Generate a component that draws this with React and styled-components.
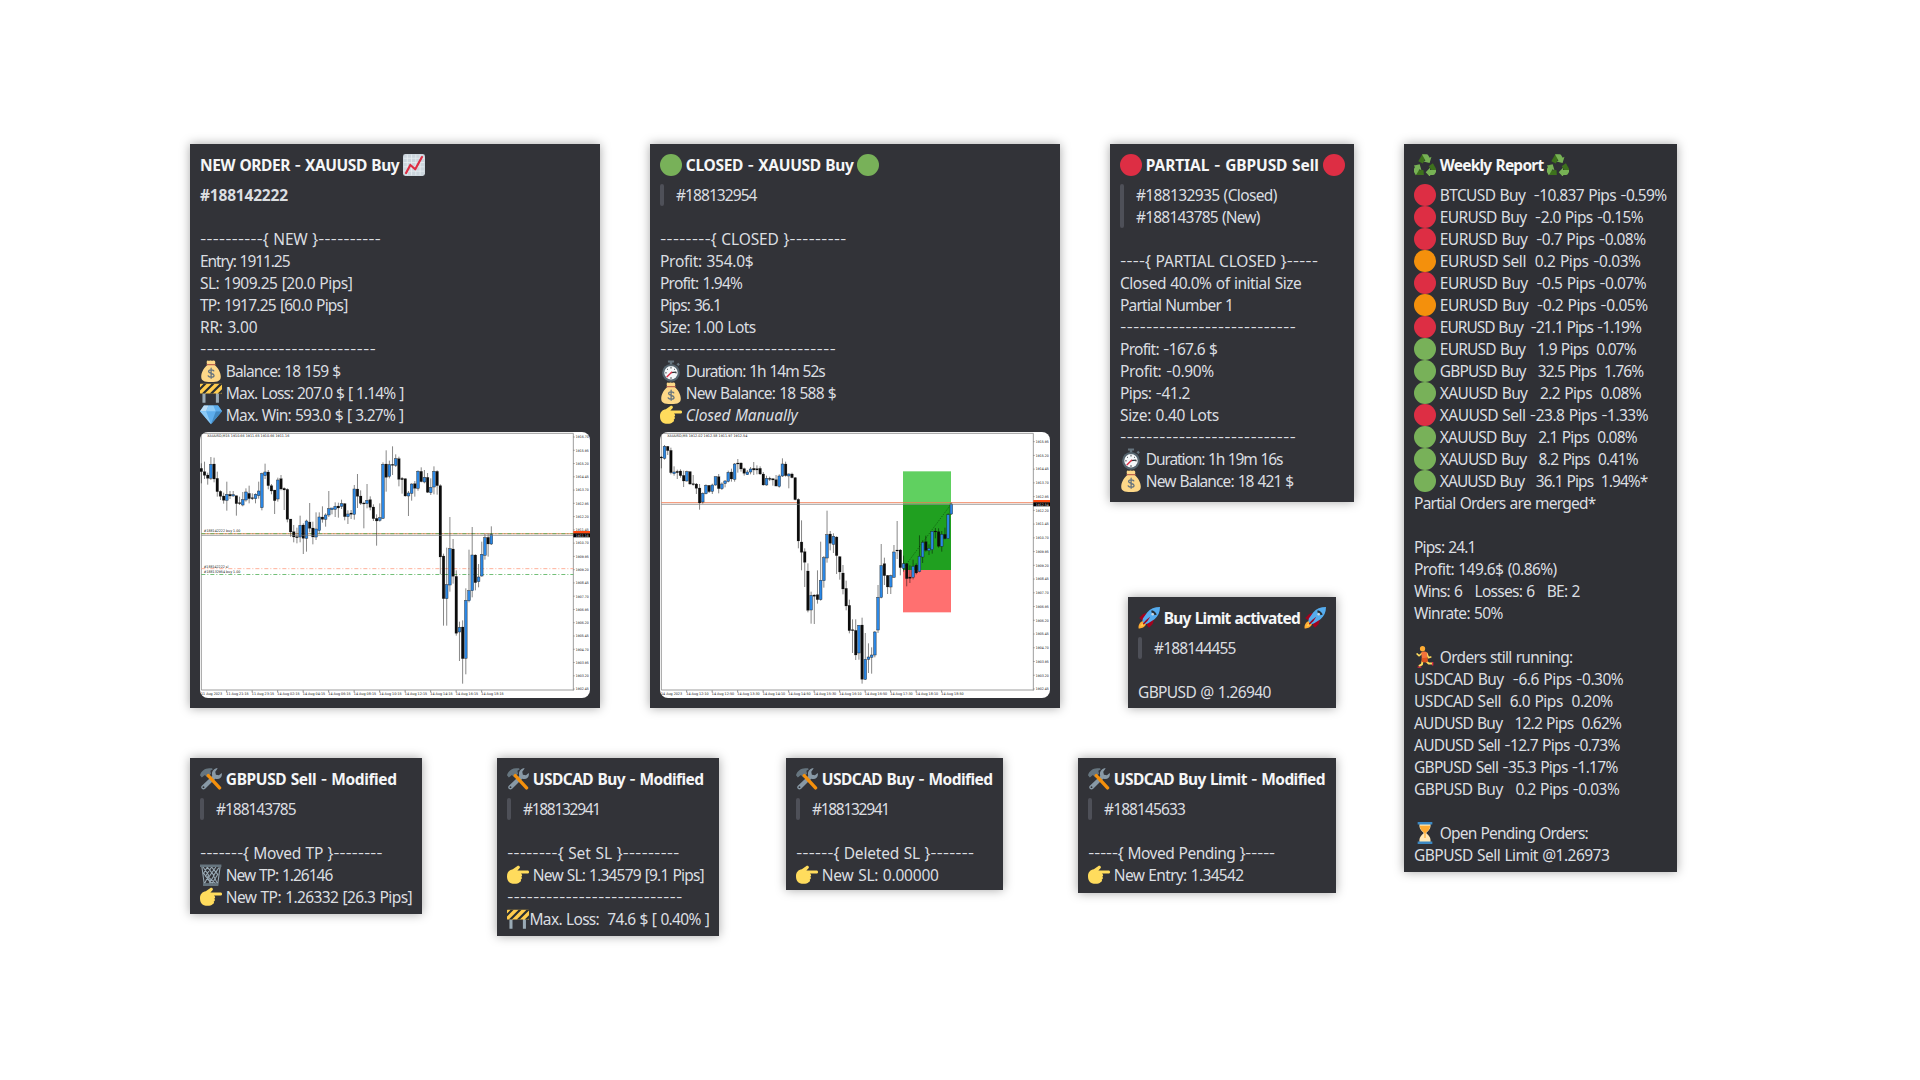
import React, { useLayoutEffect, useRef } from "react";
import styled, { createGlobalStyle } from "styled-components";

const GlobalStyle = createGlobalStyle`
  * { box-sizing: border-box; }
  body { margin: 0; background: #ffffff; }
`;

const Page = styled.main`
  display: flex;
  align-items: flex-start;
  gap: 50px;
  width: 1920px;
  height: 1080px;
  padding: 144px 0 0 190px;
  overflow: hidden;
  background: #ffffff;
  font-family: "Noto Sans", "Open Sans", sans-serif;
  font-size: 15.5px;
  line-height: 22px;
  color: #dbdee1;
`;

const Board = styled.div`
  display: flex;
  flex-direction: column;
  gap: 50px;
  width: 1164px;
`;

const TopRow = styled.div`
  display: flex;
  gap: 50px;
  height: 564px;
`;

const SideColumn = styled.div`
  display: flex;
  flex-direction: column;
  justify-content: space-between;
  align-items: center;
  width: 244px;
`;

const BottomRow = styled.div`
  display: grid;
  grid-template-columns: 307px 289px 292px 258px;
  align-items: start;
`;

const Card = styled.section`
  flex: none;
  width: ${(p) => p.$width}px;
  padding: 10px 10px ${(p) => p.$bottom ?? 10}px;
  background: ${(p) => p.$bg ?? "#323338"};
  box-shadow: 0 0 10px rgba(0, 0, 0, 0.35);
`;

const Line = styled.div`
  display: flex;
  align-items: center;
  gap: ${(p) => (p.$tight ? 0.5 : 3.8)}px;
  height: 22px;
  white-space: pre;
  font-style: ${(p) => (p.$italic ? "italic" : "normal")};
  font-weight: ${(p) => (p.$bold ? 700 : 400)};
`;

const Title = styled.h2`
  display: flex;
  align-items: center;
  gap: 3.8px;
  height: 22px;
  margin: 0 0 8px;
  font-size: inherit;
  font-weight: 700;
  color: #f5f6f7;
`;

const Quote = styled.blockquote`
  margin: 0;
  display: flex;
  gap: 12px;
  &::before {
    content: "";
    width: 4px;
    border-radius: 3px;
    background: #4e5058;
  }
`;

const Words = styled.span`
  flex: none;
  white-space: pre;
  word-spacing: 0.8px;
`;

const Dash = styled.span`
  font-family: Inter, sans-serif;
  font-size: 14px;
  line-height: 0;
  vertical-align: 1px;
`;

const Emoji = styled.svg`
  flex: none;
  display: block;
  width: 22px;
  height: 22px;
`;

const ChartFrame = styled.svg`
  display: block;
  width: 390px;
  height: 266px;
  margin-top: 6px;
  border-radius: 8px;
  background: #ffffff;
`;

/* Text whose tracking is computed so the line takes the given width. */
function Fit({ w, children }) {
  const ref = useRef(null);
  useLayoutEffect(() => {
    const el = ref.current;
    el.style.letterSpacing = "0px";
    const natural = el.getBoundingClientRect().width;
    el.style.letterSpacing = `${(w - natural) / (children.length - 0.5)}px`;
  }, [w, children]);
  return (
    <Words ref={ref}>
      {children.split(/(-+)/).map((s, i) => (s[0] === "-" ? <Dash key={i}>{s}</Dash> : s))}
    </Words>
  );
}

const disc = (c) => <circle cx="18" cy="18" r="18" fill={c} />;

const recycleArm = (
  <g>
    <path fill="#3E721D" d="M7 12 12.5 2.5Q14 .5 17 .5L19 6 14.500 15.500Z" />
    <path fill="#77B255" d="M13 .4H20.500Q22.500 .5 23.500 2.300L25.700 6.300 28.600 4.600 25.500 14.800 15.600 12.400 18.700 10.500Z" />
  </g>
);

const EMOJI = {
  red: disc("#DD2E44"),
  green: disc("#78B159"),
  orange: disc("#F4900C"),
  chart: (
    <g>
      <rect width="36" height="36" rx="4" fill="#CCD6DD" />
      <path d="M1 7h34M1 14h34M1 21h34M1 28h34M7 1v34M14 1v34M21 1v34M28 1v34" stroke="#E8EEF2" strokeWidth="1.300" />
      <path d="M5 31 12 18l8 7L31 5" fill="none" stroke="#DD2E44" strokeWidth="3.600" strokeLinecap="round" strokeLinejoin="round" />
    </g>
  ),
  bag: (
    <g>
      <path fill="#FDD888" d="M12 8C10 4 11 0 13 1s3-1 5 0 3-1 5 0 3 3 1 7c5 4 10 12 10 19 0 7-4 9-16 9S2 34 2 27C2 20 7 12 12 8Z" />
      <path d="M11.500 7.500h13.200" stroke="#BF6952" strokeWidth="2.200" strokeLinecap="round" />
      <path d="M22.500 17.800C21 15.500 14 15.600 14 19c0 3.700 9 2.300 9 6.200 0 3.700-7.800 3.700-9.600.8M18.200 13.500v16.500" fill="none" stroke="#67757F" strokeWidth="2.100" strokeLinecap="round" />
    </g>
  ),
  barrier: (
    <g>
      <path fill="#99AAB5" d="M4 17h5v17H4zM26 17h5v17h-5z" />
      <rect y="3" width="36" height="16" rx="1" fill="#FFCC4D" />
      <path fill="#292F33" d="M0 9 6 3h5L0 14zM3 19 19 3h5L8 19zM16 19 32 3h4v1L21 19zM29 19l7-7v5l-2 2z" />
    </g>
  ),
  gem: (
    <g>
      <path fill="#5DADEC" d="M0 12 6.500 2.500h23L36 12 18 33Z" />
      <path fill="#BDDDF4" d="M0 12 6.500 2.500H14L10 12Z" />
      <path fill="#8CCAF7" d="M14 2.500h8L26 12H10ZM0 12h10l8 21Z" />
      <path fill="#4289C1" d="M26 12h10L18 33Z" />
      <path fill="#5DADEC" d="M22 2.500h7.500L36 12H26Z" />
    </g>
  ),
  watch: (
    <g>
      <path fill="#66757F" d="M13 1h10v3H13zM16 3h4v4h-4zM27 7l3-2.500 2.500 3L30 10z" />
      <circle cx="18" cy="21" r="14.500" fill="#55646E" />
      <circle cx="18" cy="21" r="11" fill="#F5F8FA" />
      <path d="M18 11v3M18 28v3M8.500 21h2.500M25 21h2.500M11.500 14.500l1.500 1.500M24.500 14.500 23 16" stroke="#292F33" strokeWidth="1.400" />
      <path d="m18 20.500 8.500-.5" stroke="#292F33" strokeWidth="2" />
      <path d="m19 20-7.500 7.500" stroke="#DD2E44" strokeWidth="2.200" strokeLinecap="round" />
    </g>
  ),
  point: (
    <path
      fill="#FFDC5D"
      d="M0 20C0 13 4 9.500 9.500 8.500L16.500 3.500c3-2 6 1 4 3.500L17 10.500H33.500c3.500 0 3.500 5 0 5H23c2 1.500 2.500 4 .5 5 1.500 2 1 4-1 4.700 1 2.300 0 4-2 4.500C17 34 5 33 2.500 28.500 .5 26 0 23 0 20Z"
    />
  ),
  recycle: (
    <g>
      {recycleArm}
      <g transform="rotate(120 18 20.500)">{recycleArm}</g>
      <g transform="rotate(240 18 20.500)">{recycleArm}</g>
    </g>
  ),
  runner: (
    <g>
      <circle cx="14" cy="4.500" r="4.300" fill="#FFAC33" />
      <path d="M14 11 8.500 16 5 13M21 12l2.500 7 4-1" fill="none" stroke="#FFDC5D" strokeWidth="2.600" strokeLinecap="round" strokeLinejoin="round" />
      <path d="M14 24 13 30 8 33M20 25l4 3.500h7" fill="none" stroke="#FFDC5D" strokeWidth="3.200" strokeLinejoin="round" />
      <path fill="#F4723B" d="M12 10.500c3-2.500 9-1.500 9.500 1L22 25l-9-1Z" />
      <path fill="#DD551F" d="m12.500 20 9.500-1 .5 7-4 1-6-1Z" />
      <path d="M6 34.500h6M30.500 26v6" fill="none" stroke="#DD2E44" strokeWidth="2.200" />
    </g>
  ),
  hourglass: (
    <g>
      <path fill="#FFE8B6" d="M9 3h18c1 8-3 11-7 15 4 4 8 7 7 15H9c-1-8 3-11 7-15C12 14 8 11 9 3Z" />
      <path fill="#FFAC33" d="M9.500 6h17c0 5-3.500 8-7.500 12v8h-2v-8C13 14 9.500 11 9.500 6Z" />
      <path fill="#3B88C3" d="M6 0h24v4H6zM6 32h24v4H6z" />
    </g>
  ),
  bin: (
    <g>
      <path d="M3 4 7 33h22l4-29M5 5l9 13-6 13M12 5 6 15l12 17M12 5l11 14-8 13M19 5 9 20l12 12M19 5l10 12-9 15M26 5 14 22l12 10M31 6 22 19l6 12" fill="none" stroke="#99AAB5" strokeWidth="1.700" />
      <path fill="#66757F" d="M0 1h35v4H0zM5 31.500h25V36H5z" />
    </g>
  ),
  rocket: (
    <g>
      <path fill="#A0041E" d="M2 18 8 12q4-3 9-1L7 22ZM18 34l6-6q3-4 1-9L14 29Z" />
      <path fill="#FFAC33" d="M1 35C0 31 3 24 8 23l5 5c-1 5-8 8-12 7Z" />
      <path fill="#FFCC4D" d="M4 32c0-3 3-6 6-6l1 1c-1 3-4 5-7 5Z" />
      <path fill="#55ACEE" d="M36 0C27 0 20 3 15 9L8 19q-2 4 1 7t7 1l11-7C33 15 36 9 36 0Z" />
      <path fill="#A0041E" d="M8 27q6-7 12-11-3 7-11 13Z" />
      <path d="M22 7q5 1 7 6" fill="none" stroke="#292F33" strokeWidth="3.500" />
      <circle cx="24" cy="12" r="2" fill="#CCD6DD" />
    </g>
  ),
  tools: (
    <g>
      <path fill="#8899A6" d="M3 29 20 13C18 6 23 0 29 .5l-4 5.500 1 5 5 1 4.500-4c2 7-4 12-10.500 9.500L8.500 34c-3.500 3.500-9-1-5.500-5Z" />
      <circle cx="5.700" cy="31.300" r="1.500" fill="#323338" />
      <path fill="#66757F" d="M0 12C2 5 8 .5 15 .5h4.500L21 2l-4 2.500 1 5-6 6-4-4-5 4Z" />
      <path d="m13.500 12.500 18.500 20" stroke="#F4900C" strokeWidth="5.500" strokeLinecap="round" />
    </g>
  ),
};

const Icon = ({ name }) => (
  <Emoji viewBox="0 0 36 36" aria-hidden="true">{EMOJI[name]}</Emoji>
);

/* A row is [text, width, icon?, options?]; null is an empty line. */
function Rows({ items }) {
  return items.map((r, i) =>
    r === null ? (
      <Line key={i} />
    ) : (
      <Line key={i} $bold={r[3]?.bold} $italic={r[3]?.italic} $tight={r[3]?.tight}>
        {r[2] && <Icon name={r[2]} />}
        <Fit w={r[1]}>{r[0]}</Fit>
      </Line>
    )
  );
}

function Message({ width, bottom, bg, title, before, after, quote, rows, children }) {
  return (
    <Card $width={width} $bottom={bottom} $bg={bg}>
      <Title>
        {before && <Icon name={before} />}
        <Fit w={title[1]}>{title[0]}</Fit>
        {after && <Icon name={after} />}
      </Title>
      {quote && (
        <Quote>
          <div><Rows items={quote} /></div>
        </Quote>
      )}
      <Rows items={rows} />
      {children}
    </Card>
  );
}

/* Candles: direction (U up, D down), high, open/close top, bottom, low. */
const CANDLES_M15 = `D115,130,140,175 D110,140,151,162 D143,150,160,179 U96,118,160,165 D98,117,162,172 D140,160,200,215 D196,199,214,225 D203,213,226,236 U170,208,226,257 D198,208,213,222 U198,209,213,215 D212,212,236,272 D215,233,236,240 U201,224,240,244 U190,201,225,230 D182,205,221,235 D205,218,221,225 U205,208,221,235 U170,198,212,221 U143,146,248,256 U116,141,152,162 D135,141,182,193 D177,182,198,208 D195,195,227,267 U158,165,222,230 D150,161,192,196 D187,190,195,255 D190,193,283,292 D282,282,321,335 D300,320,336,352 D308,335,338,355 U272,301,336,352 D295,300,340,387 U284,288,340,380 D234,291,310,322 D290,309,336,358 U262,312,336,345 U262,276,316,325 D244,276,283,293 U265,270,283,305 U198,251,270,276 U249,249,254,268 U232,244,253,276 D233,243,249,278 U224,236,244,252 D234,236,275,286 U256,267,275,297 D255,264,268,282 U180,192,268,284 D147,192,214,249 D196,213,235,240 D230,234,237,310 U177,226,236,250 D214,224,247,256 D238,246,281,288 D268,280,288,362 U235,278,286,290 U112,118,280,282 D76,117,157,200 U107,119,154,160 D64,118,121,150 U88,101,121,126 D95,101,163,184 D156,160,164,206 D160,161,213,215 U198,204,213,273 U175,177,205,227 D168,176,190,215 U136,139,190,197 D127,139,170,172 U135,157,171,175 D144,157,202,204 U160,187,203,210 U124,139,186,208 D136,139,182,209 D178,182,396,448 D386,393,521,602 U368,479,521,602 U276,371,480,500 D342,372,454,476 D436,454,625,632 U590,607,621,708 D586,606,701,776 U490,526,700,748 U374,497,527,532 U306,390,497,517 D388,390,473,496 U417,456,470,487 U350,388,453,455 U326,338,391,404 D325,337,357,395 U304,329,357,360`;

const CANDLES_M5 = `D93,96,99,130 U60,64,100,104 D63,64,77,90 D68,76,143,148 U124,141,146,152 D134,139,143,162 D133,138,152,158 D137,151,168,186 U137,140,168,170 D138,140,177,180 D150,176,179,182 D174,177,190,207 D177,189,234,254 U202,205,231,236 U178,181,206,208 D180,181,200,204 U176,180,199,207 U155,155,180,182 D147,155,191,205 U172,177,191,195 U165,168,176,187 U137,142,169,172 D131,141,162,170 U114,117,163,170 D102,114,116,143 D112,114,132,140 D128,131,145,152 U135,141,149,150 U126,132,141,148 D111,130,135,150 D121,131,135,148 D124,130,147,150 D141,147,180,182 U152,160,180,182 D155,160,163,168 D160,161,165,182 D150,164,183,185 U148,153,184,188 U100,117,153,156 D110,117,152,155 U145,147,153,190 D143,147,158,160 D156,158,224,226 D220,223,348,370 D286,351,382,436 D370,380,412,486 D415,438,556,562 U500,511,555,596 D508,510,514,597 D436,509,524,536 U350,466,524,527 U393,398,467,488 U257,329,399,413 D318,327,355,376 U325,334,358,384 D334,336,392,447 D393,395,441,464 D420,444,492,508 D467,490,543,556 D524,541,617,625 D583,614,617,684 D583,616,690,705 U600,601,684,704 D578,600,763,776 U624,703,763,765 U655,696,703,744 U667,690,697,746 U618,621,690,697 U480,517,615,624 U357,422,517,520 D398,416,452,480 D450,451,486,507 U449,452,486,507 U360,381,457,458 D288,375,378,402 D372,375,428,451 U392,416,430,440 D414,416,461,484 D421,456,460,474 U404,424,457,463 D415,420,444,448 U331,394,440,442 U346,352,396,414 D332,350,376,380 U358,370,377,390 U318,319,374,386 D309,318,321,340 D310,320,364,368 U318,328,364,380 D308,328,341,343 U265,269,341,342 U233,237,267,270`;

const Candles = ({ data }) =>
  data.split(" ").map((c, i) => {
    const [hi, top, bot, lo] = c.slice(1).split(",").map(Number);
    const x = 34 + i * 9.56;
    const up = c[0] === "U";
    return (
      <g key={i}>
        <path d={`M${x} ${hi}V${lo}`} stroke="#000" strokeOpacity="0.6" strokeWidth="2.400" />
        <rect x={x - 4} y={top} width="8" height={Math.max(bot - top, 3)} fill={up ? "#2b88e6" : "#0c0c0c"} stroke="#1a1a1a" strokeOpacity={up ? 0.75 : 0.3} strokeWidth="1.600" />
      </g>
    );
  });

const Tiny = styled.text`
  font-family: "DejaVu Sans", sans-serif;
  font-size: 10.5px;
  fill: ${(p) => p.$fill ?? "#111"};
`;

function Chart({ title, titleWidth, candles, top, step, first, dates, price, lineY, zones, levels }) {
  const count = Math.round((792 - top) / step) + 1;
  return (
    <ChartFrame viewBox="30 21 1170 798" preserveAspectRatio="none">
      {zones}
      <path d="M34 795V25H1150V797M34 795H1150" fill="none" stroke="#8a8a8a" strokeWidth="2.500" />
      <Tiny x="52" y="37" textLength={titleWidth} lengthAdjust="spacingAndGlyphs">{title}</Tiny>
      {Array.from({ length: count }, (_, i) => (
        <g key={i}>
          <path d={`M1150 ${top + i * step}h4`} stroke="#666" strokeWidth="2" />
          <Tiny x="1157" y={top + i * step + 4} textLength="39" lengthAdjust="spacingAndGlyphs">{(first - i * 0.75).toFixed(2)}</Tiny>
        </g>
      ))}
      {dates.map((d, i) => (
        <g key={d}>
          {i > 0 && <path d={`M${110 + (i - 1) * 76.500} 796v6`} stroke="#555" strokeWidth="2" />}
          <Tiny x={i ? 109 + (i - 1) * 76.500 : 33} y="811" textLength={i ? 67 : 63} lengthAdjust="spacingAndGlyphs">{d}</Tiny>
        </g>
      ))}
      {levels}
      <Candles data={candles} />
      <path d={`M34 ${lineY + 5}H1150`} stroke="#777" strokeWidth="2" />
      <rect x="1150" y={lineY - 8} width="50" height="8" fill="#ff4a10" />
      <rect x="1150" y={lineY - 1} width="50" height="12" fill="#000" />
      <Tiny x="1157" y={lineY + 9} textLength="39" lengthAdjust="spacingAndGlyphs" $fill="#ddd">{price}</Tiny>
    </ChartFrame>
  );
}

const RULE = "-".repeat(27);

const WEEKLY = [
  ["BTCUSD Buy  -10.837 Pips -0.59%", 227, "red"],
  ["EURUSD Buy  -2.0 Pips -0.15%", 203.5, "red"],
  ["EURUSD Buy  -0.7 Pips -0.08%", 206, "red"],
  ["EURUSD Sell  0.2 Pips -0.03%", 201, "orange"],
  ["EURUSD Buy  -0.5 Pips -0.07%", 206.5, "red"],
  ["EURUSD Buy  -0.2 Pips -0.05%", 208, "orange"],
  ["EURUSD Buy  -21.1 Pips -1.19%", 201.5, "red"],
  ["EURUSD Buy   1.9 Pips  0.07%", 196.5, "green"],
  ["GBPUSD Buy   32.5 Pips  1.76%", 204, "green"],
  ["XAUUSD Buy   2.2 Pips  0.08%", 201.5, "green"],
  ["XAUUSD Sell -23.8 Pips -1.33%", 208.5, "red"],
  ["XAUUSD Buy   2.1 Pips  0.08%", 197.5, "green"],
  ["XAUUSD Buy   8.2 Pips  0.41%", 198.5, "green"],
  ["XAUUSD Buy   36.1 Pips  1.94%*", 208, "green"],
  ["Partial Orders are merged*", 182],
  null,
  ["Pips: 24.1", 62],
  ["Profit: 149.6$ (0.86%)", 143],
  ["Wins: 6   Losses: 6   BE: 2", 166],
  ["Winrate: 50%", 89],
  null,
  ["Orders still running:", 133, "runner"],
  ["USDCAD Buy  -6.6 Pips -0.30%", 209.5],
  ["USDCAD Sell  6.0 Pips  0.20%", 199],
  ["AUDUSD Buy   12.2 Pips  0.62%", 207.5],
  ["AUDUSD Sell -12.7 Pips -0.73%", 206],
  ["GBPUSD Sell -35.3 Pips -1.17%", 204],
  ["GBPUSD Buy   0.2 Pips -0.03%", 205.5],
  null,
  ["Open Pending Orders:", 148.5, "hourglass"],
  ["GBPUSD Sell Limit @1.26973", 195.5],
];

export default function App() {
  return (
    <>
      <GlobalStyle />
      <Page>
        <Board>
          <TopRow>
            <Message
              width={410}
              title={["NEW ORDER - XAUUSD Buy", 199.5]}
              after="chart"
              rows={[
                ["#188142222", 88, null, { bold: true }],
                null,
                ["----------{ NEW }----------", 181],
                ["Entry: 1911.25", 90],
                ["SL: 1909.25 [20.0 Pips]", 152.5],
                ["TP: 1917.25 [60.0 Pips]", 148],
                ["RR: 3.00", 57.5],
                [RULE, 176],
                ["Balance: 18 159 $", 115, "bag"],
                ["Max. Loss: 207.0 $ [ 1.14% ]", 178, "barrier"],
                ["Max. Win: 593.0 $ [ 3.27% ]", 178, "gem"],
              ]}
            >
              <Chart
                title="XAUUSD,M15  1910.66 1911.65 1910.66 1911.16"
                titleWidth={246}
                candles={CANDLES_M15}
                top={36}
                step={39.8}
                first={1916.7}
                price="1911.16"
                lineY={326}
                dates={["11 Aug 2023", "11 Aug 21:15", "11 Aug 23:15", "14 Aug 02:15", "14 Aug 04:15", "14 Aug 06:15", "14 Aug 08:15", "14 Aug 10:15", "14 Aug 12:15", "14 Aug 14:15", "14 Aug 16:15", "14 Aug 18:15"]}
                levels={
                  <g strokeWidth="2.400">
                    <path d="M34 326H1150" stroke="#ef7a4a" />
                    <path d="M34 326H1150" stroke="#4caf50" strokeDasharray="12 6 3 6" />
                    <path d="M34 431H1150" stroke="#ff9d80" strokeDasharray="12 6 3 6" />
                    <path d="M34 448.500H1150" stroke="#4fae55" strokeDasharray="12 6 3 6" />
                    <Tiny x="41" y="321" textLength="110" lengthAdjust="spacingAndGlyphs">#188142222 buy 1.00</Tiny>
                    <Tiny x="41" y="428" textLength="74" lengthAdjust="spacingAndGlyphs">#188142222 sl</Tiny>
                    <Tiny x="41" y="444" textLength="110" lengthAdjust="spacingAndGlyphs">#188132954 buy 1.00</Tiny>
                  </g>
                }
              />
            </Message>

            <Message
              width={410}
              title={["CLOSED - XAUUSD Buy", 168]}
              before="green"
              after="green"
              quote={[["#188132954", 81]]}
              rows={[
                null,
                ["--------{ CLOSED }---------", 186.5],
                ["Profit: 354.0$", 93.5],
                ["Profit: 1.94%", 82.5],
                ["Pips: 36.1", 61.5],
                ["Size: 1.00 Lots", 96],
                [RULE, 176],
                ["Duration: 1h 14m 52s", 139.5, "watch"],
                ["New Balance: 18 588 $", 150.5, "bag"],
                ["Closed Manually", 112, "point", { italic: true }],
              ]}
            >
              <Chart
                title="XAUUSD,M5  1912.02 1912.58 1911.97 1912.54"
                titleWidth={240}
                candles={CANDLES_M5}
                top={50}
                step={41.22}
                first={1915.95}
                price="1912.54"
                lineY={233}
                dates={["14 Aug 2023", "14 Aug 12:10", "14 Aug 12:50", "14 Aug 13:30", "14 Aug 14:10", "14 Aug 14:50", "14 Aug 15:30", "14 Aug 16:10", "14 Aug 16:50", "14 Aug 17:30", "14 Aug 18:10", "14 Aug 18:50"]}
                zones={
                  <g>
                    <rect x="759" y="139" width="144" height="99" fill="#60d060" />
                    <rect x="759" y="238" width="144" height="197" fill="#20a020" />
                    <rect x="759" y="435" width="144" height="127" fill="#ff7070" />
                    <path d="M760 430 903 238" stroke="#0b4d0b" strokeWidth="2" strokeDasharray="4 4" />
                  </g>
                }
                levels={<path d="M34 233H1150" stroke="#f0764a" strokeWidth="2.500" />}
              />
            </Message>

            <SideColumn>
              <Message
                width={244}
                title={["PARTIAL - GBPUSD Sell", 173]}
                before="red"
                after="red"
                quote={[["#188132935 (Closed)", 141], ["#188143785 (New)", 124]]}
                rows={[
                  null,
                  ["----{ PARTIAL CLOSED }-----", 198],
                  ["Closed 40.0% of initial Size", 181.5],
                  ["Partial Number 1", 113.5],
                  [RULE, 176],
                  ["Profit: -167.6 $", 97.5],
                  ["Profit: -0.90%", 94],
                  ["Pips: -41.2", 70],
                  ["Size: 0.40 Lots", 99],
                  [RULE, 176],
                  ["Duration: 1h 19m 16s", 137, "watch"],
                  ["New Balance: 18 421 $", 148, "bag"],
                ]}
              />
              <Message
                width={208}
                bottom={5}
                title={["Buy Limit activated", 136.5]}
                before="rocket"
                after="rocket"
                quote={[["#188144455", 82]]}
                rows={[null, ["GBPUSD @ 1.26940", 133]]}
              />
            </SideColumn>
          </TopRow>

          <BottomRow>
            <Message
              width={232}
              bottom={6}
              title={["GBPUSD Sell - Modified", 171]}
              before="tools"
              quote={[["#188143785", 80]]}
              rows={[
                null,
                ["-------{ Moved TP }--------", 182.5],
                ["New TP: 1.26146", 107, "bin"],
                ["New TP: 1.26332 [26.3 Pips]", 186.5, "point"],
              ]}
            />
            <Message
              width={222}
              bottom={6}
              title={["USDCAD Buy - Modified", 171]}
              before="tools"
              quote={[["#188132941", 77.5]]}
              rows={[
                null,
                ["--------{ Set SL }---------", 172.5],
                ["New SL: 1.34579 [9.1 Pips]", 171.5, "point"],
                [RULE, 175.5],
                ["Max. Loss:  74.6 $ [ 0.40% ]", 180, "barrier", { tight: true }],
              ]}
            />
            <Message
              width={217}
              bottom={4}
              title={["USDCAD Buy - Modified", 171]}
              before="tools"
              quote={[["#188132941", 77.5]]}
              rows={[null, ["------{ Deleted SL }-------", 178], ["New SL: 0.00000", 117, "point"]]}
            />
            <Message
              width={258}
              bottom={7}
              title={["USDCAD Buy Limit - Modified", 211.5]}
              before="tools"
              quote={[["#188145633", 81.5]]}
              rows={[null, ["-----{ Moved Pending }-----", 187], ["New Entry: 1.34542", 130, "point"]]}
            />
          </BottomRow>
        </Board>

        <Message
          width={273}
          bottom={6}
          bg="#2f3035"
          title={["Weekly Report", 104]}
          before="recycle"
          after="recycle"
          rows={WEEKLY}
        />
      </Page>
    </>
  );
}
